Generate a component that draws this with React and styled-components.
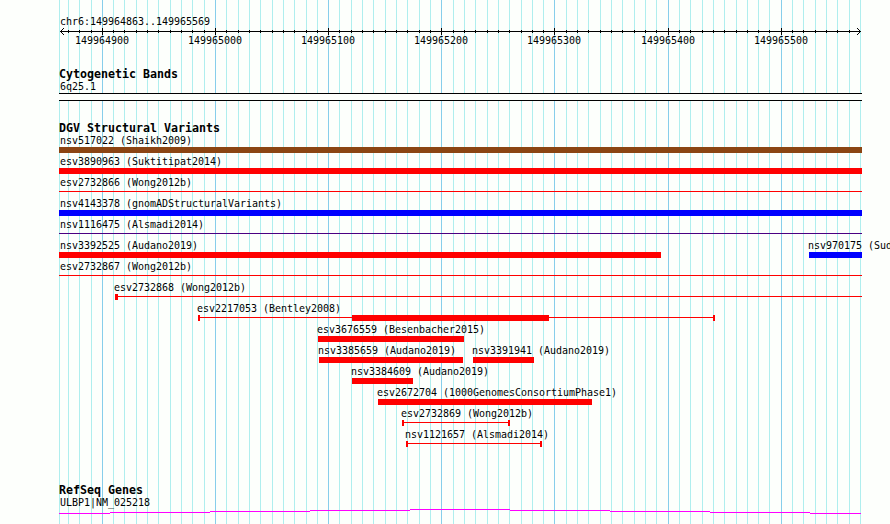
import React from "react";
import styled, { createGlobalStyle } from "styled-components";

const LEFT = 59;

// offsets of the ten-base gridlines from the panel edge
const grid = [
  0, 9, 20, 32, 43, 54, 65, 77, 88, 99, 111, 122, 133, 145, 156, 167, 179, 190, 201, 213, 224, 235,
  247, 258, 269, 280, 292, 303, 314, 326, 337, 348, 360, 371, 382, 394, 405, 416, 428, 439, 450,
  462, 473, 484, 495, 507, 518, 529, 541, 552, 563, 575, 586, 597, 609, 620, 631, 643, 654, 665,
  677, 688, 699, 710, 722, 733, 744, 756, 767, 778, 790, 801,
];

const majors = [
  { at: 43, text: "149964900" },
  { at: 156, text: "149965000" },
  { at: 269, text: "149965100" },
  { at: 382, text: "149965200" },
  { at: 495, text: "149965300" },
  { at: 609, text: "149965400" },
  { at: 722, text: "149965500" },
];

const isMajor = (x) => majors.some((m) => m.at === x);

const rows = [
  [{ name: "nsv517022 (Shaikh2009)", start: 59, end: 862, color: "#8b4513" }],
  [{ name: "esv3890963 (Suktitipat2014)", start: 59, end: 862 }],
  [{ name: "esv2732866 (Wong2012b)", start: 59, end: 862, thin: true }],
  [{ name: "nsv4143378 (gnomADStructuralVariants)", start: 59, end: 862, color: "#0000ff" }],
  [{ name: "nsv1116475 (Alsmadi2014)", start: 59, end: 862, color: "#4b0082", thin: true }],
  [
    { name: "nsv3392525 (Audano2019)", start: 59, end: 661 },
    { name: "nsv970175 (Sud", start: 809, end: 862, color: "#0000ff" },
  ],
  [{ name: "esv2732867 (Wong2012b)", start: 59, end: 862, thin: true }],
  [{ name: "esv2732868 (Wong2012b)", start: 115, end: 862, thin: true, blocks: [[115, 118]] }],
  [{ name: "esv2217053 (Bentley2008)", start: 198, end: 715, thin: true, blocks: [[198, 200], [352, 549], [713, 715]] }],
  [{ name: "esv3676559 (Besenbacher2015)", start: 318, end: 464 }],
  [
    { name: "nsv3385659 (Audano2019)", start: 319, end: 463 },
    { name: "nsv3391941 (Audano2019)", start: 473, end: 534 },
  ],
  [{ name: "nsv3384609 (Audano2019)", start: 352, end: 413 }],
  [{ name: "esv2672704 (1000GenomesConsortiumPhase1)", start: 378, end: 592 }],
  [{ name: "esv2732869 (Wong2012b)", start: 402, end: 510, thin: true, blocks: [[402, 404], [508, 510]] }],
  [{ name: "nsv1121657 (Alsmadi2014)", start: 406, end: 542, thin: true, blocks: [[406, 408], [540, 542]] }],
];

function Ruler() {
  return (
    <RulerSvg viewBox="0 0 803 7" shapeRendering="crispEdges">
      <rect x="1" y="3" width="801" height="1" />
      {grid.slice(1, -1).map((x) => (
        <rect key={x} x={x} y={isMajor(x) ? 0 : 2} width="1" height={isMajor(x) ? 7 : 3} />
      ))}
      {[1, 2, 3].map((d) => (
        <g key={d}>
          <rect x={1 + d} y={3 - d} width="1" height="1" />
          <rect x={1 + d} y={3 + d} width="1" height="1" />
          <rect x={801 - d} y={3 - d} width="1" height="1" />
          <rect x={801 - d} y={3 + d} width="1" height="1" />
        </g>
      ))}
    </RulerSvg>
  );
}

function Variant({ item, prev }) {
  const { name, start, end, thin, blocks = [], color = "#ff0000" } = item;
  return (
    <Feature $gap={start - prev} $width={end - start}>
      <Label $indent={start === LEFT ? 1 : -1}>{name}</Label>
      <Glyph viewBox={`0 0 ${end - start} 6`} fill={color} shapeRendering="crispEdges">
        <rect y={thin ? 2 : 0} width={end - start} height={thin ? 1 : 6} />
        {blocks.map(([a, b]) => (
          <rect key={a} x={a - start} width={b - a} height="6" />
        ))}
      </Glyph>
    </Feature>
  );
}

function App() {
  return (
    <Page>
      <GlobalStyle />
      <Gridlines viewBox="0 0 803 524" shapeRendering="crispEdges">
        {grid.map((x) => (
          <rect key={x} x={x} width="1" height="524" fill={isMajor(x) ? "#87ceeb" : "#afeeee"} />
        ))}
      </Gridlines>
      <Panel>
        <Scale>
          <Label $indent={1}>chr6:149964863..149965569</Label>
          <Ruler />
          <Ticks>
            {majors.map((m, i) => (
              <Tick key={m.text} $gap={i ? m.at - majors[i - 1].at - 54 : m.at - 27}>
                <Label $indent={0}>{m.text}</Label>
              </Tick>
            ))}
          </Ticks>
        </Scale>
        <Bands>
          <Heading>Cytogenetic Bands</Heading>
          <Label $indent={1}>6q25.1</Label>
          <Band />
        </Bands>
        <Variants>
          <Heading>DGV Structural Variants</Heading>
          {rows.map((row) => (
            <Row key={row[0].name}>
              {row.map((item, i) => (
                <Variant key={item.name} item={item} prev={i ? row[i - 1].end : LEFT} />
              ))}
            </Row>
          ))}
        </Variants>
        <Genes>
          <Heading>RefSeq Genes</Heading>
          <Label $indent={1}>ULBP1|NM_025218</Label>
          <GeneLine viewBox="0 0 803 5" fill="#ff00ff" shapeRendering="crispEdges">
            <rect x="0" y="4" width="51" height="1" />
            {[3, 2, 1, 0, 1, 2, 3].map((y, i) => (
              <rect key={i} x={51 + i * 100} y={y} width="100" height="1" />
            ))}
            <rect x="751" y="4" width="51" height="1" />
          </GeneLine>
        </Genes>
      </Panel>
    </Page>
  );
}

const GlobalStyle = createGlobalStyle`
  body {
    margin:0;
    background:#fdfffc;
    overflow:hidden;
  }
  svg {
    display:block;
    flex-shrink:0;
  }
`
const Page = styled.div`
  position:relative;
  width:890px;
  height:524px;
  overflow:hidden;
  background:#fdfffc;
  color:#000;
`
const Gridlines = styled.svg`
  position:absolute;
  top:0;
  left:${LEFT}px;
  width:803px;
  height:524px;
`
const Panel = styled.div`
  position:relative;
  width:803px;
  padding:13px 0 0 ${LEFT}px;
`
const Label = styled.div`
  height:11px;
  padding:3px 0 1px;
  margin-left:${(p) => p.$indent}px;
  font:10px/11px "DejaVu Sans Mono", monospace;
  letter-spacing:-0.02px;
  white-space:pre;
  transform:scaleY(1.1);
  transform-origin:0 12px;
`
const Heading = styled.h2`
  height:13px;
  margin:0;
  font:bold 11.63px/12px "DejaVu Sans Mono", monospace;
  white-space:pre;
`
const Scale = styled.section`
  height:55px;
`
const RulerSvg = styled.svg`
  width:803px;
  height:7px;
`
const Ticks = styled.div`
  display:flex;
  margin-top:-3px;
`
const Tick = styled.div`
  width:54px;
  flex-shrink:0;
  margin-left:${(p) => p.$gap}px;
`
const Bands = styled.section`
  height:54px;
  ${Label} {
    padding-top:0;
    transform-origin:0 9px;
  }
`
const Band = styled.div`
  box-sizing:border-box;
  width:803px;
  height:8px;
  background:#fdfffc;
  border:solid #000;
  border-width:1px 0;
`
const Variants = styled.section`
  height:362px;
  ${Heading} {
    height:10px;
  }
`
const Row = styled.div`
  display:flex;
  height:21px;
`
const Feature = styled.div`
  flex-shrink:0;
  width:${(p) => p.$width}px;
  margin-left:${(p) => p.$gap}px;
`
const Glyph = styled.svg`
  width:100%;
  height:6px;
`
const Genes = styled.section`
  ${Label} {
    padding-top:0;
    transform-origin:0 9px;
  }
`
const GeneLine = styled.svg`
  width:803px;
  height:5px;
`
export default App
